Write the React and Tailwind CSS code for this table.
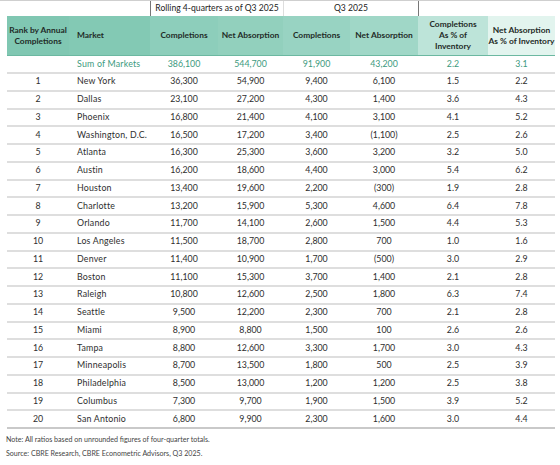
import React from 'react'

const rows = [
  [1, 'New York', '36,300', '54,900', '9,400', '6,100', '1.5', '2.2'],
  [2, 'Dallas', '23,100', '27,200', '4,300', '1,400', '3.6', '4.3'],
  [3, 'Phoenix', '16,800', '21,400', '4,100', '3,100', '4.1', '5.2'],
  [4, 'Washington, D.C.', '16,500', '17,200', '3,400', '(1,100)', '2.5', '2.6'],
  [5, 'Atlanta', '16,300', '25,300', '3,600', '3,200', '3.2', '5.0'],
  [6, 'Austin', '16,200', '18,600', '4,400', '3,000', '5.4', '6.2'],
  [7, 'Houston', '13,400', '19,600', '2,200', '(300)', '1.9', '2.8'],
  [8, 'Charlotte', '13,200', '15,900', '5,300', '4,600', '6.4', '7.8'],
  [9, 'Orlando', '11,700', '14,100', '2,600', '1,500', '4.4', '5.3'],
  [10, 'Los Angeles', '11,500', '18,700', '2,800', '700', '1.0', '1.6'],
  [11, 'Denver', '11,400', '10,900', '1,700', '(500)', '3.0', '2.9'],
  [12, 'Boston', '11,100', '15,300', '3,700', '1,400', '2.1', '2.8'],
  [13, 'Raleigh', '10,800', '12,600', '2,500', '1,800', '6.3', '7.4'],
  [14, 'Seattle', '9,500', '12,200', '2,300', '700', '2.1', '2.8'],
  [15, 'Miami', '8,900', '8,800', '1,500', '100', '2.6', '2.6'],
  [16, 'Tampa', '8,800', '12,600', '3,300', '1,700', '3.0', '4.3'],
  [17, 'Minneapolis', '8,700', '13,500', '1,800', '500', '2.5', '3.9'],
  [18, 'Philadelphia', '8,500', '13,000', '1,200', '1,200', '2.5', '3.8'],
  [19, 'Columbus', '7,300', '9,700', '1,900', '1,500', '3.9', '5.2'],
  [20, 'San Antonio', '6,800', '9,900', '2,300', '1,600', '3.0', '4.4'],
]

const grid = 'grid grid-cols-[62px_81px_68px_65px_67px_68px_70px_67px]'

function Row({ cells, last }) {
  return (
    <div
      className={`${grid} h-[17.75px] items-center border-b-2 ${last ? 'border-[#c9c9c9]' : 'border-[#dedede]'} text-[#2e2e2e]`}
    >
      {cells.map((c, i) => (
        <div key={i} className={i === 1 ? 'pl-[8px] whitespace-nowrap tracking-[0.2px]' : 'text-center'}>
          {c}
        </div>
      ))}
    </div>
  )
}

export default function App() {
  return (
    <div className="w-[560px] h-[465px] bg-white font-['Lato',sans-serif] text-[8.8px] leading-none">
      {/* group headers */}
      <div className="h-[16px] border-t border-[#cfcfcf] flex text-[8.6px] text-[#222]">
        <div className="w-[150px]" />
        <div className="w-[133px] border-l border-[#777] flex items-center justify-center">
          Rolling 4-quarters as of Q3 2025
        </div>
        <div className="w-[135px] border-l border-[#ddd] flex items-center justify-center">Q3 2025</div>
        <div className="w-[142px] border-l border-[#777]" />
      </div>

      <div className="ml-[7px] w-[548px]">
        {/* column headers */}
        <div className={`${grid} h-[40px] items-center font-bold text-[8.4px] text-[#1f2b27] leading-[1.3] border-b border-[#6cb8a1]`}>
          <div className="h-full flex items-center justify-center text-center bg-[#80c7b2]">Rank by Annual<br />Completions</div>
          <div className="h-full flex items-center pl-[8px] bg-[#83c9b4]">Market</div>
          <div className="h-full flex items-center justify-center bg-[#8dcebb]">Completions</div>
          <div className="h-full flex items-center justify-center bg-[#92d0bd]">Net Absorption</div>
          <div className="h-full flex items-center justify-center bg-[#98d3c2]">Completions</div>
          <div className="h-full flex items-center justify-center bg-[#a0d7c7]">Net Absorption</div>
          <div className="h-full flex items-center justify-center text-center bg-[#bde4d9]">Completions<br />As % of<br />Inventory</div>
          <div className="h-full flex items-center justify-center text-center bg-[#e2f4ee]">Net Absorption<br />As % of Inventory</div>
        </div>

        <div className={`${grid} h-[18px] items-center border-b-2 border-[#dedede] text-[#3c9a7e]`}>
          <div />
          <div className="pl-[8px] tracking-[0.2px]">Sum of Markets</div>
          <div className="text-center">386,100</div>
          <div className="text-center">544,700</div>
          <div className="text-center">91,900</div>
          <div className="text-center">43,200</div>
          <div className="text-center">2.2</div>
          <div className="text-center">3.1</div>
        </div>

        {rows.map((r, i) => (
          <Row key={r[0]} cells={r} last={i === rows.length - 1} />
        ))}
      </div>

      <div className="pl-[6px] pt-[4px] text-[7.1px] text-[#444] leading-[14px]">
        <div>Note: All ratios based on unrounded figures of four-quarter totals.</div>
        <div>Source: CBRE Research, CBRE Econometric Advisors, Q3 2025.</div>
      </div>
    </div>
  )
}
